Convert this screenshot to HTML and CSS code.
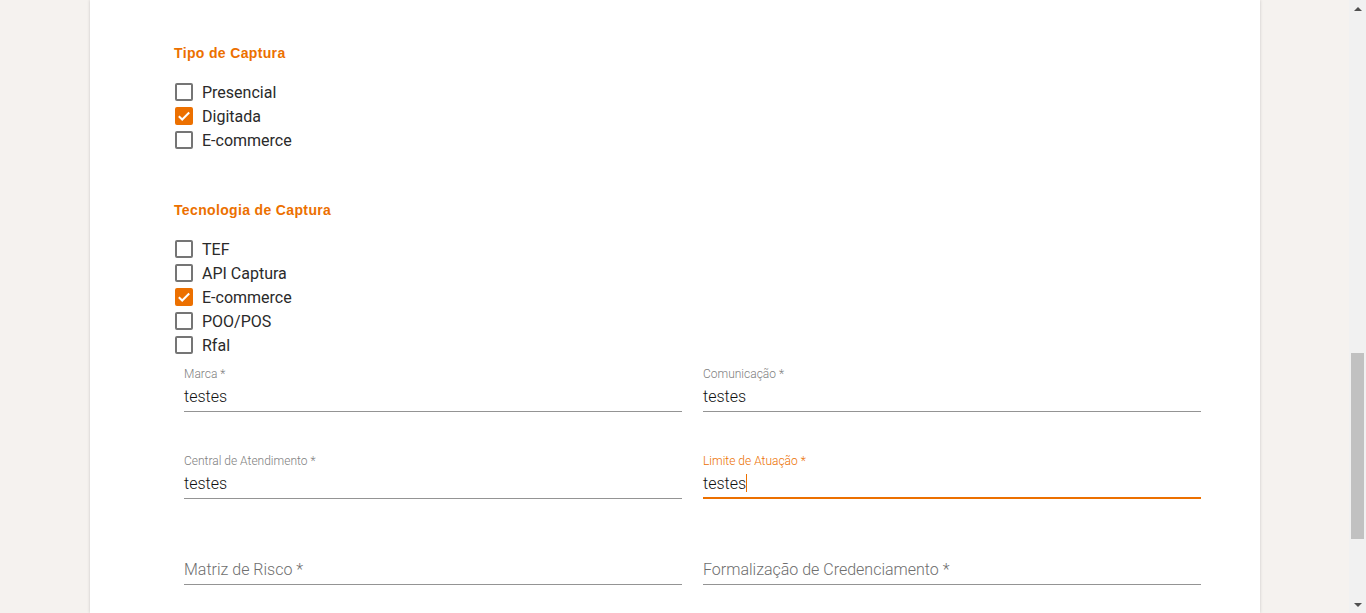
FILE: index.html
```html
<!DOCTYPE html>
<html lang="pt-BR">
<head>
<meta charset="utf-8">
<title>Captura</title>
<link rel="stylesheet" href="styles.css">
</head>
<body>
<div class="viewport">
  <main class="card">
    <section class="group">
      <h3 class="group-title">Tipo de Captura</h3>
      <ul class="checks">
        <li class="check"><span class="box"></span><span class="check-label">Presencial</span></li>
        <li class="check"><span class="box checked"><svg viewBox="0 0 18 18" class="tick"><path d="M3.8 9.2l3.4 3.3 7-7" fill="none" stroke="#fff" stroke-width="2"/></svg></span><span class="check-label">Digitada</span></li>
        <li class="check"><span class="box"></span><span class="check-label">E-commerce</span></li>
      </ul>
    </section>
    <section class="group group-second">
      <h3 class="group-title">Tecnologia de Captura</h3>
      <ul class="checks">
        <li class="check"><span class="box"></span><span class="check-label">TEF</span></li>
        <li class="check"><span class="box"></span><span class="check-label">API Captura</span></li>
        <li class="check"><span class="box checked"><svg viewBox="0 0 18 18" class="tick"><path d="M3.8 9.2l3.4 3.3 7-7" fill="none" stroke="#fff" stroke-width="2"/></svg></span><span class="check-label">E-commerce</span></li>
        <li class="check"><span class="box"></span><span class="check-label">POO/POS</span></li>
        <li class="check"><span class="box"></span><span class="check-label">Rfal</span></li>
      </ul>
    </section>
    <div class="fields">
      <div class="field">
        <div class="field-label">Marca *</div>
        <div class="field-input">testes</div>
      </div>
      <div class="field">
        <div class="field-label">Comunicação *</div>
        <div class="field-input">testes</div>
      </div>
      <div class="field">
        <div class="field-label">Central de Atendimento *</div>
        <div class="field-input">testes</div>
      </div>
      <div class="field focused">
        <div class="field-label">Limite de Atuação *</div>
        <div class="field-input">testes<span class="caret"></span></div>
      </div>
      <div class="field empty">
        <div class="field-label"></div>
        <div class="field-input placeholder">Matriz de Risco *</div>
      </div>
      <div class="field empty">
        <div class="field-label"></div>
        <div class="field-input placeholder">Formalização de Credenciamento *</div>
      </div>
    </div>
  </main>
</div>
<div class="scrollbar">
  <div class="arrow arrow-up"></div>
  <div class="track"><div class="thumb"></div></div>
  <div class="arrow arrow-down"></div>
</div>
</body>
</html>
```
FILE: styles.css
```css
html, body {
  margin: 0;
  padding: 0;
  height: 613px;
  overflow: hidden;
}
body {
  display: flex;
  font-family: Roboto, "Liberation Sans", Arial, sans-serif;
  color: #212121;
}
.viewport {
  flex: 1;
  background: #f5f2ef;
  padding-left: 90px;
  overflow: hidden;
}
.card {
  width: 1170px;
  height: 613px;
  background: #fff;
  box-shadow: 0 0 3px rgba(0,0,0,0.18);
  box-sizing: border-box;
  padding: 43px 49px 0 84px;
}
.group-title {
  margin: 0;
  font-family: "Liberation Sans", Arial, sans-serif;
  font-size: 14px;
  line-height: 20px;
  font-weight: 700;
  letter-spacing: 0.35px;
  color: #ec7000;
}
.group-second {
  margin-top: 48px;
}
.checks {
  list-style: none;
  margin: 17px 0 0 0;
  padding: 0;
}
.check {
  display: flex;
  align-items: center;
  height: 24px;
}
.box {
  width: 18px;
  height: 18px;
  box-sizing: border-box;
  border: 2px solid #757575;
  border-radius: 2px;
  margin-left: 1px;
  position: relative;
}
.box.checked {
  background: #ec7000;
  border-color: #ec7000;
}
.tick {
  position: absolute;
  left: -2px;
  top: -2px;
  width: 18px;
  height: 18px;
}
.check-label {
  margin-left: 9px;
  padding-top: 2px;
  font-size: 16px;
  line-height: 20px;
  font-weight: 400;
  color: #2a2a2a;
}
.fields {
  margin-top: 8px;
  display: grid;
  grid-template-columns: 1fr 1fr;
  column-gap: 21px;
  row-gap: 40px;
  padding: 0 10px;
}
.field-label {
  height: 16px;
  padding-top: 1px;
  font-size: 12px;
  line-height: 16px;
  font-weight: 300;
  color: #808080;
}
.field-input {
  margin-top: 5px;
  font-size: 16px;
  line-height: 20px;
  font-weight: 300;
  padding-bottom: 4px;
  border-bottom: 1px solid #949494;
  color: #111;
}
.field.focused .field-label {
  color: #ec7000;
}
.field.focused .field-input {
  border-bottom: 2px solid #ec7000;
  padding-bottom: 3px;
}
.caret {
  display: inline-block;
  width: 1px;
  height: 18px;
  background: #ec7000;
  vertical-align: -3px;
}
.field.empty {
  margin-top: -1px;
}
.placeholder {
  color: #6e6e6e;
}
.scrollbar {
  width: 17px;
  background: #f1f1f1;
  display: flex;
  flex-direction: column;
}
.arrow {
  height: 17px;
  display: flex;
  align-items: center;
  justify-content: center;
}
.arrow-up::before {
  content: "";
  border-left: 4px solid transparent;
  border-right: 4px solid transparent;
  border-bottom: 4px solid #505050;
}
.arrow-down::before {
  content: "";
  border-left: 4px solid transparent;
  border-right: 4px solid transparent;
  border-top: 4px solid #505050;
}
.track {
  flex: 1;
  padding-top: 336px;
}
.thumb {
  margin: 0 2px;
  height: 186px;
  background: #c1c1c1;
}
```
